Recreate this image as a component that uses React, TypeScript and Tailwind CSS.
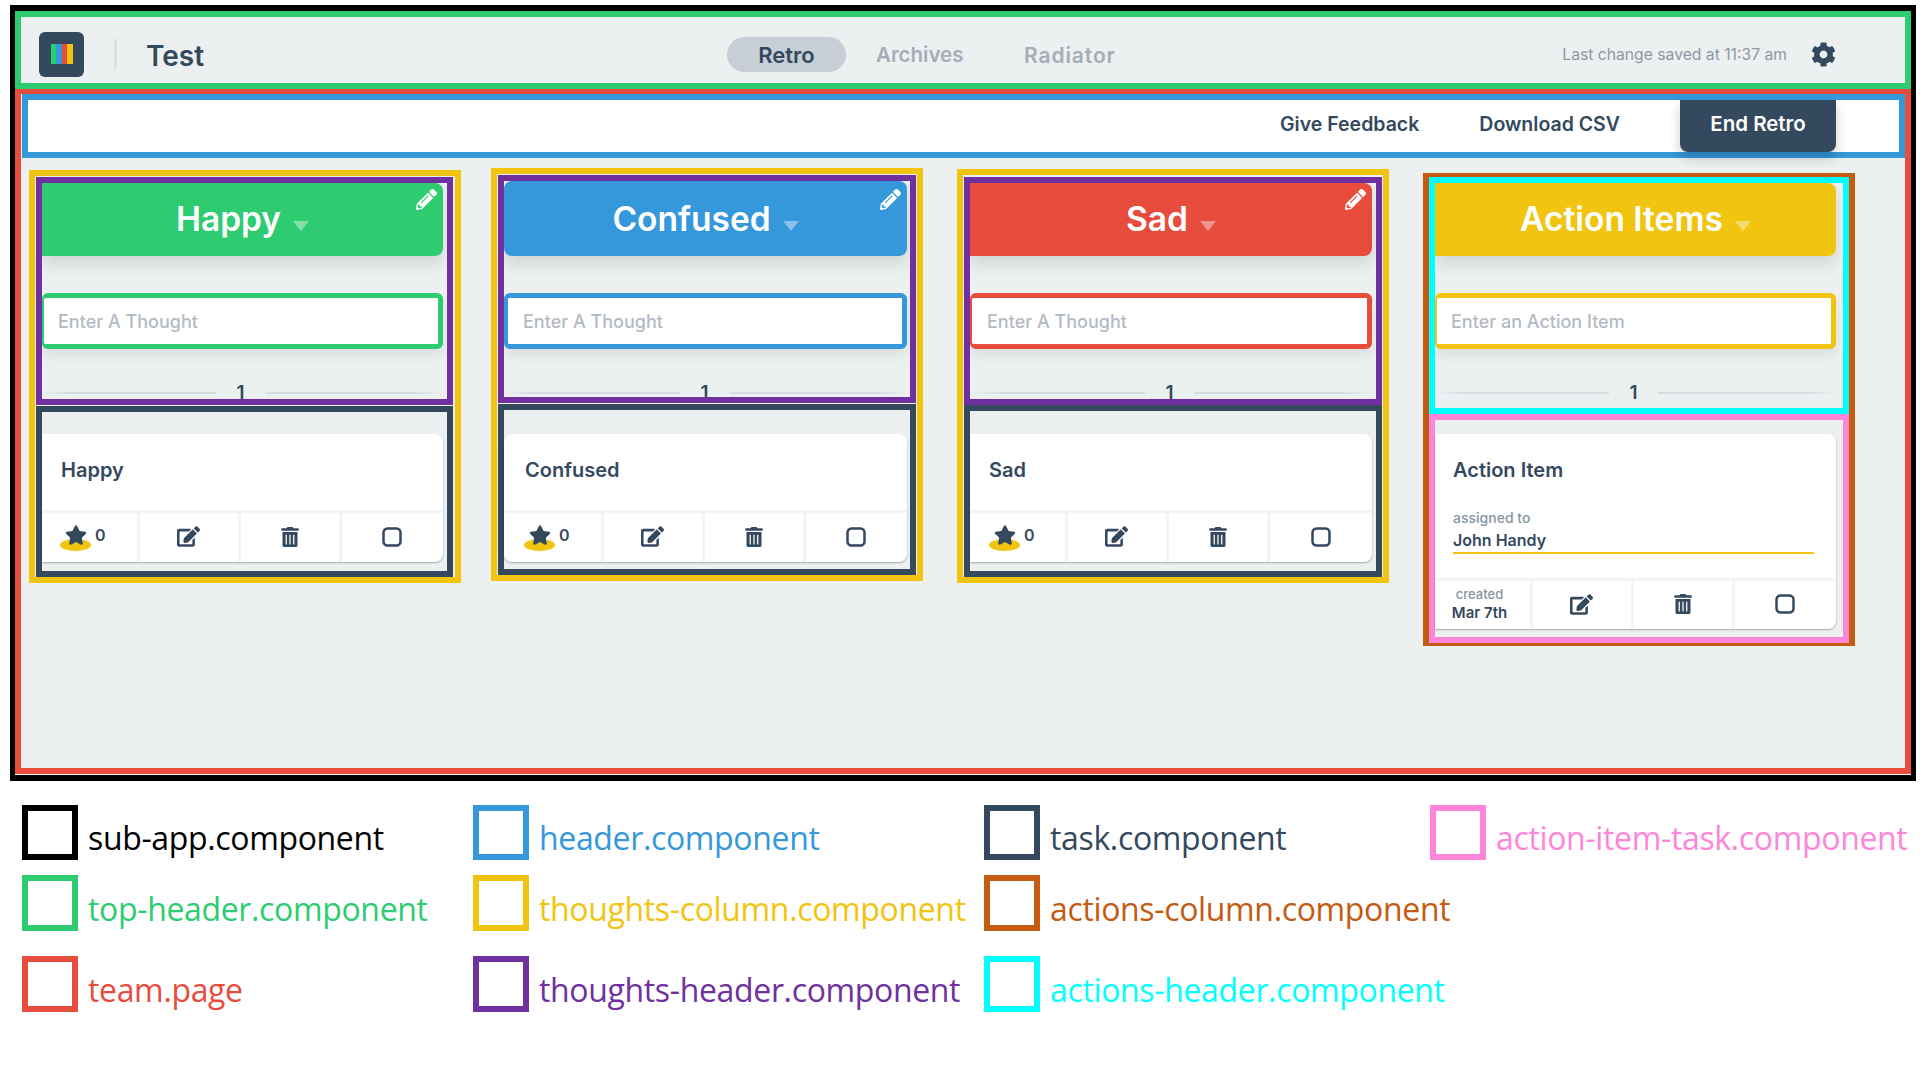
import React from 'react';
import { FaCog, FaEdit, FaPencilAlt, FaStar, FaTrashAlt } from 'react-icons/fa';

const Caret = () => (
    <span className="ml-[12px] mt-[12px] h-0 w-0 border-x-[8px] border-t-[10px] border-x-transparent border-t-white/40" />
);

const Divider: React.FC<{ className: string }> = ({ className }) => (
    <div className={`mt-[32px] flex h-[24px] items-center text-[#34495e] ${className}`}>
        <div className="h-[2px] w-[173px] bg-linear-to-r from-transparent via-[#d8dbe0] via-[15%] to-[#d8dbe0]" />
        <div className="w-[49px] text-center text-[19px] font-semibold">1</div>
        <div className="h-[2px] flex-1 bg-linear-to-l from-transparent via-[#d8dbe0] via-[15%] to-[#d8dbe0]" />
    </div>
);

const Actions = () => (
    <>
        <div className="flex items-center justify-center border-r-[3px] border-[#f2f4f5] pb-[2px] pr-[2px] text-[#34495e]">
            <FaEdit size={23} />
        </div>
        <div className="flex items-center justify-center border-r-[3px] border-[#f2f4f5] pb-[2px] pr-[1px] text-[#34495e]">
            <FaTrashAlt size={20} />
        </div>
        <div className="flex items-center justify-center pb-[2px] pr-[1px] text-[#34495e]">
            <svg width="20" height="20" viewBox="0 0 20 20" fill="none">
                <rect x="1.5" y="1.5" width="17" height="17" rx="4" stroke="currentColor" strokeWidth="2.5" />
            </svg>
        </div>
    </>
);

interface ThoughtsColumnProps {
    title: string;
    outer: string;
    frame: string;
    width: string;
    header: string;
    input: string;
    line: string;
    task: string;
    cardText: string;
    footer: string;
    star: string;
}

const ThoughtsColumn: React.FC<ThoughtsColumnProps> = ({ title, outer, frame, width, header, input, line, task, cardText, footer, star }) => (
    <div className={`w-[432px] border-[6px] border-[#f1c40f] bg-[#ecf0f1] ${outer}`}>
        <div className={`h-[228px] overflow-hidden border-[6px] border-[#7030a0] ${frame}`}>
            <div className={width}>
                <div className={`relative flex items-center justify-center shadow-[0_8px_16px_rgba(0,0,0,0.12)] ${header}`}>
                    <span className="text-[33.5px] font-semibold text-white">{title}</span>
                    <Caret />
                    <FaPencilAlt size={21} className="absolute bottom-[46px] right-[6px] text-white" />
                </div>
                <input
                    placeholder="Enter A Thought"
                    className={`mt-[37px] block h-[56px] w-full rounded-[6px] border-y-[5px] border-r-[5px] bg-white pt-[1px] text-[18px] font-medium shadow-[0_6px_12px_rgba(0,0,0,0.08)] outline-none placeholder:text-[#b4bac4] ${input}`}
                />
                <Divider className={line} />
            </div>
        </div>
        <div className={`border-[6px] border-[#34495e] ${frame} ${task}`}>
            <div className={`bg-white shadow-[0_1px_2px_rgba(0,0,0,0.3)] ${width} ${cardText}`}>
                <div className="flex h-[76px] items-center pb-[4px] text-[20px] font-semibold text-[#34495e]">{title}</div>
                <div className={`-ml-[var(--pad)] grid h-[52px] border-t-[3px] border-[#f2f4f5] ${footer}`}>
                    <div className={`flex items-center border-r-[3px] border-[#f2f4f5] text-[#34495e] ${star}`}>
                        <div className="relative h-[26px] w-[32px]">
                            <div className="absolute bottom-0 h-[12px] w-[31px] rounded-[50%] bg-[#f1c40f]" />
                            <FaStar size={22} className="absolute left-[5px] -top-px" />
                        </div>
                        <span className="mb-[6px] ml-[3px] text-[16px] font-semibold">0</span>
                    </div>
                    <Actions />
                </div>
            </div>
        </div>
    </div>
);

const ActionsColumn = () => (
    <div className="ml-[34px] mt-[15px] w-[432px] border-x-[6px] border-b-[3px] border-t-[4px] border-[#c55a11] bg-[#ecf0f1]">
        <div className="h-[237px] overflow-hidden border-[6px] border-[#00ffff]">
            <div className="w-[401px]">
                <div className="flex h-[73px] items-center justify-center rounded-r-[8px] bg-[#f1c40f] shadow-[0_8px_16px_rgba(0,0,0,0.12)]">
                    <span className="text-[33.5px] font-semibold text-white">Action Items</span>
                    <Caret />
                </div>
                <input
                    placeholder="Enter an Action Item"
                    className="mt-[37px] block h-[56px] w-full rounded-[6px] border-y-[5px] border-l-[2px] border-r-[5px] border-[#f1c40f] bg-white pl-[14px] pt-[1px] text-[18px] font-medium shadow-[0_6px_12px_rgba(0,0,0,0.08)] outline-none placeholder:text-[#b4bac4]"
                />
                <Divider className="ml-[1px]" />
            </div>
        </div>
        <div className="h-[229px] border-[6px] border-[#ff85d8] pt-[14px]">
            <div className="w-[401px] rounded-r-[8px] bg-white shadow-[0_1px_2px_rgba(0,0,0,0.3)]">
                <div className="h-[144px] pl-[18px] pr-[22px] text-[#34495e]">
                    <div className="pt-[24px] text-[20px] font-semibold leading-[24px]">Action Item</div>
                    <div className="mt-[27px] text-[14px] font-medium leading-[18px] text-[#8795a1]">assigned to</div>
                    <div className="mt-[3px] border-b-2 border-[#f1c40f] pb-[2px] text-[16px] font-semibold leading-[20px]">John Handy</div>
                </div>
                <div className="grid h-[51px] grid-cols-[98px_101px_101px_1fr] border-t-[3px] border-[#f2f4f5]">
                    <div className="flex flex-col items-center justify-center border-r-[3px] border-[#f2f4f5] pb-[2px] pr-[6px] text-[#34495e]">
                        <span className="text-[13px] font-medium leading-[17px] text-[#8795a1]">created</span>
                        <span className="text-[15px] font-semibold leading-[19px]">Mar 7th</span>
                    </div>
                    <Actions />
                </div>
            </div>
        </div>
    </div>
);

const LegendItem: React.FC<{ label: string; color: string; height: string }> = ({ label, color, height }) => (
    <div className="flex items-end">
        <div className={`w-[56px] shrink-0 border-[6px] ${height} ${color}`} />
        <span className={`ml-[10px] whitespace-nowrap font-['Open_Sans',sans-serif] text-[32px] leading-[44px] tracking-[-0.35px] ${color}`}>{label}</span>
    </div>
);

export default function App() {
    return (
        <div className="h-[1080px] w-[1920px] overflow-hidden bg-white pt-[5px] font-['Inter',sans-serif]">
            <div className="ml-[10px] h-[776px] w-[1906px] border-x-[5px] border-y-[6px] border-black">
                <header className="flex h-[78px] items-center border-[6px] border-[#2ecc71] bg-[#ecf0f1] pt-[8px]">
                    <div className="ml-[18px] flex h-[45px] w-[45px] items-center justify-center rounded-[6px] bg-[#34495e]">
                        <div className="flex h-[20px] w-[22px]">
                            <div className="flex-1 bg-[#2ecc71]" />
                            <div className="flex-1 bg-[#3498db]" />
                            <div className="flex-1 bg-[#e74c3c]" />
                            <div className="flex-1 bg-[#f1c40f]" />
                        </div>
                    </div>
                    <div className="ml-[30px] h-[30px] w-[3px] bg-[#dde1e3]" />
                    <div className="ml-[29px] w-[581px] pt-[3px] text-[28px] font-semibold text-[#34495e]">Test</div>
                    <div className="flex h-[35px] w-[119px] items-center justify-center rounded-full bg-[#c8ced5] pt-[3px] text-[22px] font-semibold text-[#34495e]">Retro</div>
                    <div className="ml-[30px] w-[88px] whitespace-nowrap pt-[3px] text-[20.5px] font-semibold text-[#a5adb8]">Archives</div>
                    <div className="ml-[60px] whitespace-nowrap pt-[3px] text-[21px] font-semibold tracking-[0.9px] text-[#a5adb8]">Radiator</div>
                    <div className="ml-auto pt-[2px] text-[15.7px] text-[#8e98a3]">Last change saved at 11:37 am</div>
                    <FaCog size={25} className="ml-[24px] mr-[69px] text-[#34495e]" />
                </header>
                <main className="h-[685px] border-[6px] border-t-[5px] border-[#e74c3c] bg-[#ecf0f1]">
                    <div className="ml-px flex h-[64px] items-center justify-end border-[6px] border-[#3498db] bg-white text-[19.5px] font-semibold text-[#34495e]">
                        <span className="mb-[3px]">Give Feedback</span>
                        <span className="mb-[3px] ml-[60px]">Download CSV</span>
                        <div className="ml-[60px] mr-[63px] flex h-[52px] w-[156px] items-center justify-center rounded-b-[8px] bg-[#34495e] pb-[3px] text-[20.5px] text-white shadow-[0_6px_12px_rgba(0,0,0,0.2)]">End Retro</div>
                    </div>
                    <div className="flex items-start">
                        <ThoughtsColumn
                            title="Happy"
                            outer="ml-[8px] mt-[12px] pt-px"
                            frame="ml-px mr-[2px]"
                            width="w-[401px]"
                            header="h-[73px] rounded-r-[8px] bg-[#2ecc71]"
                            input="border-l-[2px] border-[#2ecc71] pl-[14px]"
                            line="ml-px"
                            task="mt-px h-[171px] pt-[22px]"
                            cardText="rounded-r-[8px] pl-[19px] [--pad:19px]"
                            footer="grid-cols-[98px_101px_101px_1fr]"
                            star="pl-[18px]"
                        />
                        <ThoughtsColumn
                            title="Confused"
                            outer="ml-[30px] mt-[10px] pt-px"
                            frame="mx-px"
                            width="w-[403px]"
                            header="h-[75px] rounded-[8px] bg-[#3498db] pt-[2px]"
                            input="border-l-[4px] border-[#3498db] pl-[15px]"
                            line="ml-[3px]"
                            task="mt-px h-[171px] pt-[24px]"
                            cardText="rounded-[8px] pl-[21px] [--pad:21px]"
                            footer="grid-cols-[100px_101px_101px_1fr]"
                            star="pl-[20px]"
                        />
                        <ThoughtsColumn
                            title="Sad"
                            outer="ml-[34px] mt-[11px] pt-[2px]"
                            frame="mx-px"
                            width="w-[402px]"
                            header="h-[73px] rounded-r-[8px] bg-[#e74c3c]"
                            input="border-l-[2px] border-[#e74c3c] pl-[15px]"
                            line="ml-[2px]"
                            task="h-[172px] pt-[23px]"
                            cardText="rounded-r-[8px] pl-[19px] [--pad:19px]"
                            footer="grid-cols-[98px_101px_101px_1fr]"
                            star="pl-[19px]"
                        />
                        <ActionsColumn />
                    </div>
                </main>
            </div>
            <div className="ml-[22px] mt-[24px] grid grid-cols-[451px_511px_446px_1fr] grid-rows-[70px_81px_56px] items-start">
                <LegendItem label="sub-app.component" color="border-black text-black" height="h-[55px]" />
                <LegendItem label="header.component" color="border-[#3498db] text-[#3498db]" height="h-[55px]" />
                <LegendItem label="task.component" color="border-[#34495e] text-[#34495e]" height="h-[55px]" />
                <LegendItem label="action-item-task.component" color="border-[#ff85d8] text-[#ff85d8]" height="h-[55px]" />
                <LegendItem label="top-header.component" color="border-[#2ecc71] text-[#2ecc71]" height="h-[56px]" />
                <LegendItem label="thoughts-column.component" color="border-[#f1c40f] text-[#f1c40f]" height="h-[56px]" />
                <LegendItem label="actions-column.component" color="border-[#c55a11] text-[#c55a11]" height="h-[56px]" />
                <div />
                <LegendItem label="team.page" color="border-[#e74c3c] text-[#e74c3c]" height="h-[56px]" />
                <LegendItem label="thoughts-header.component" color="border-[#7030a0] text-[#7030a0]" height="h-[56px]" />
                <LegendItem label="actions-header.component" color="border-[#00ffff] text-[#00ffff]" height="h-[56px]" />
            </div>
        </div>
    );
}
